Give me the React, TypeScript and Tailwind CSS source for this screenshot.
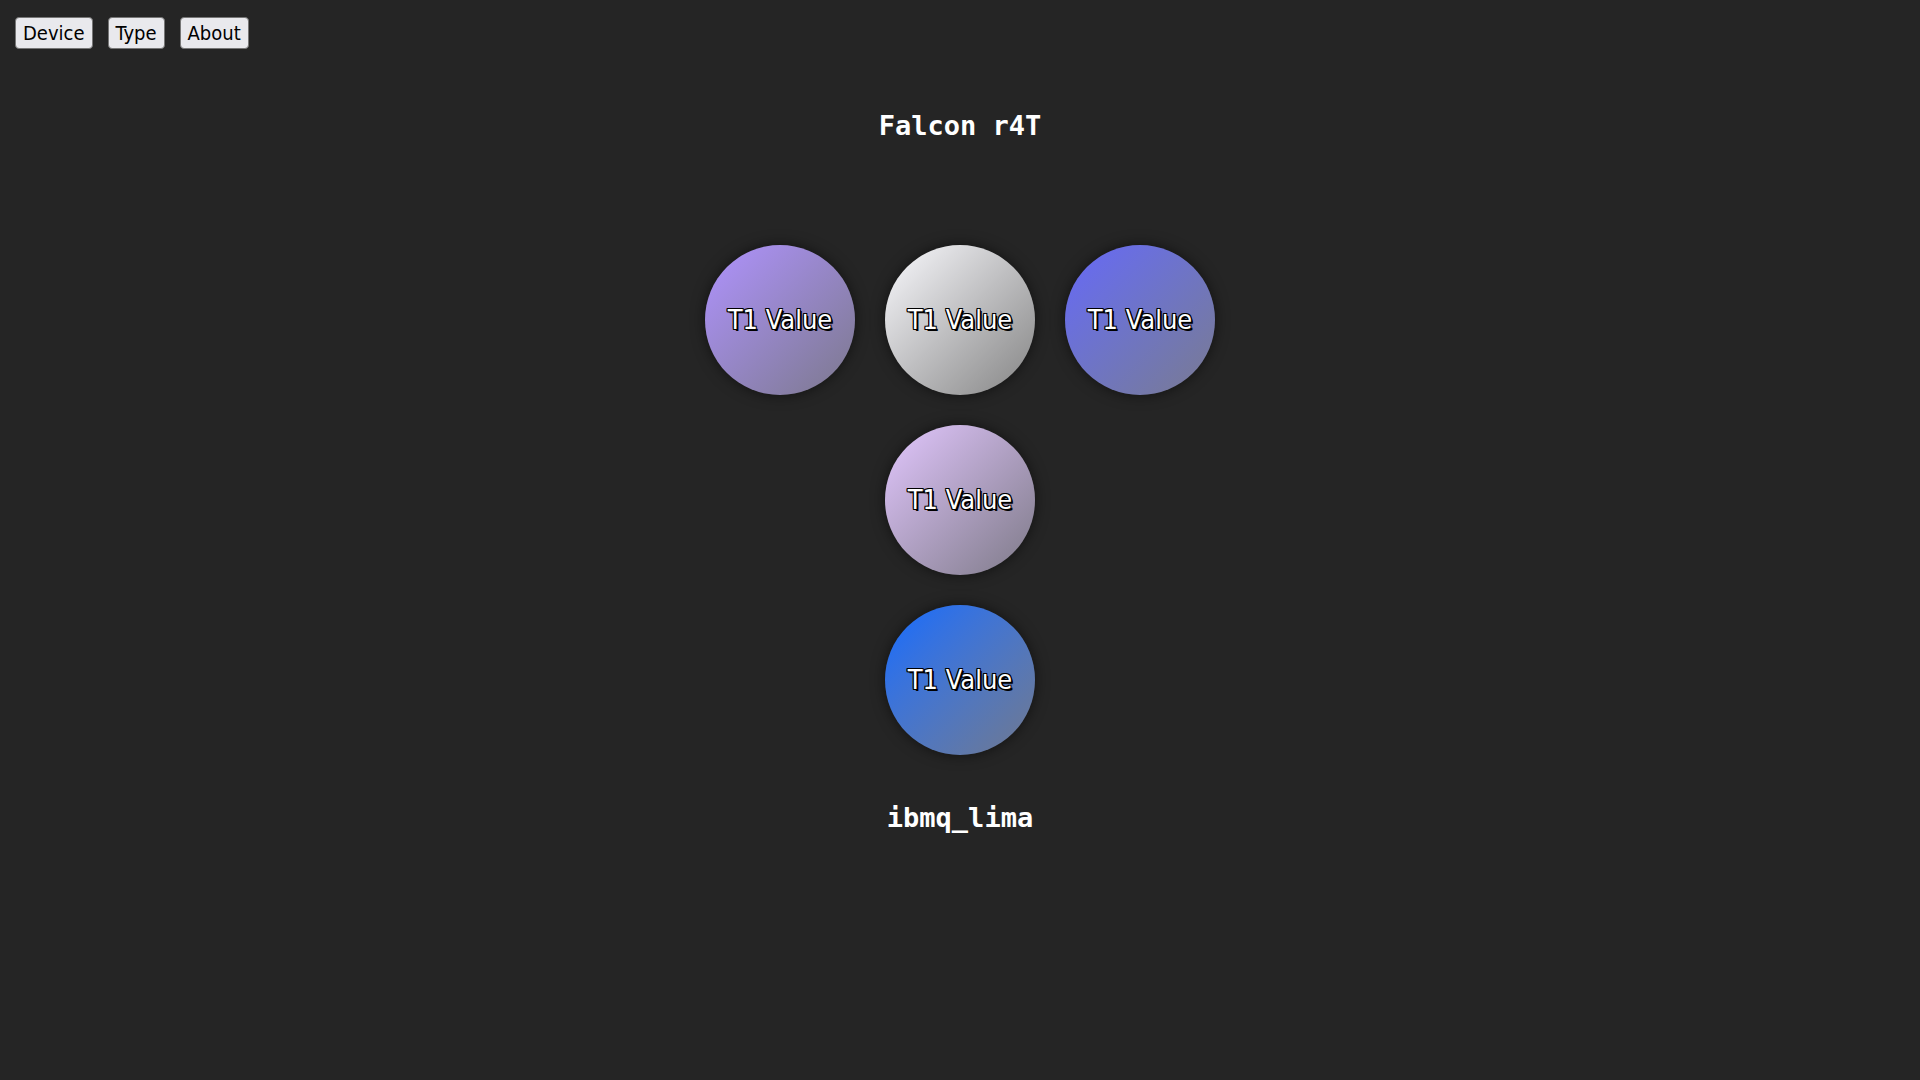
const circles = [
  ["from-[#b092ff]", "to-[#7c788c]"],
  ["from-[#fbfbff]", "to-[#858585]"],
  ["from-[#6767f8]", "to-[#7a7a90]"],
  ["from-[#e3c7ff]", "to-[#7e7a88]"],
  ["from-[#0a6aff]", "to-[#70788e]"],
];

const Qubit = ({ colors }: { colors: string[] }) => {
  return (
    <div
      className={`flex h-[150px] w-[150px] items-center justify-center rounded-full bg-gradient-to-br ${colors[0]} ${colors[1]} shadow-[0_0_14px_rgba(0,0,0,0.55)]`}
    >
      <span className="font-['DejaVu_Sans_Condensed','DejaVu_Sans',sans-serif] text-[27px] text-white [text-shadow:-1px_-1px_0_#000,1px_-1px_0_#000,-1px_1px_0_#000,1px_1px_0_#000,2px_2px_0_#000,-1px_0_0_#000,0_1px_0_#000]">
        T1 Value
      </span>
    </div>
  );
};

const App = () => {
  const navButtons = ["Device", "Type", "About"];

  return (
    <div className="min-h-screen bg-[#252525]">
      <div className="flex gap-[15px] pl-[15px] pt-[17px]">
        {navButtons.map((label) => (
          <button
            key={label}
            className="h-[32px] rounded-[4px] border border-[#767676] bg-[#e9e9ed] px-[7px] font-['DejaVu_Sans_Condensed','DejaVu_Sans',sans-serif] text-[20px] leading-none text-black"
          >
            {label}
          </button>
        ))}
      </div>

      <h1 className="mt-[60px] text-center font-['DejaVu_Sans_Mono',monospace] text-[27px] font-bold leading-[34px] text-white">
        Falcon r4T
      </h1>

      <div className="mt-[102px] flex flex-col items-center gap-[30px]">
        <div className="flex gap-[30px]">
          <Qubit colors={circles[0]} />
          <Qubit colors={circles[1]} />
          <Qubit colors={circles[2]} />
        </div>
        <Qubit colors={circles[3]} />
        <Qubit colors={circles[4]} />
      </div>

      <h2 className="mt-[46px] text-center font-['DejaVu_Sans_Mono',monospace] text-[27px] font-bold leading-[34px] text-white">
        ibmq_lima
      </h2>
    </div>
  );
};

export default App;
